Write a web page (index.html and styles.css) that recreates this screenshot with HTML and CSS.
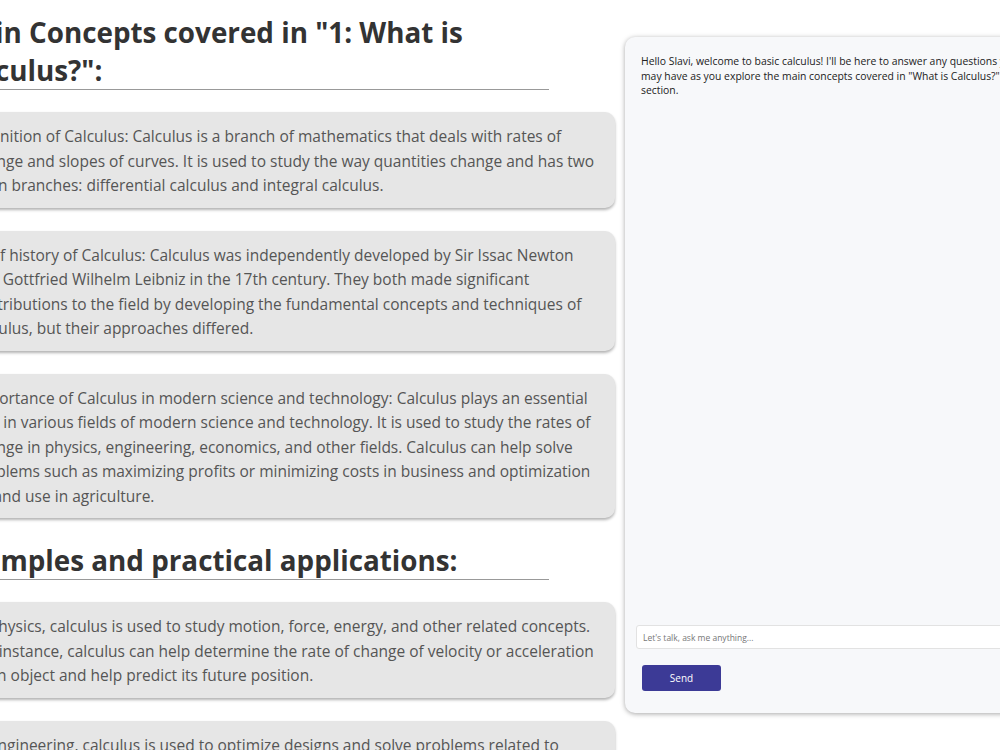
FILE: index.html
```html
<!DOCTYPE html>
<html lang="en">
<head>
  <meta charset="UTF-8">
  <title>Basic Calculus</title>
  <link rel="stylesheet" href="styles.css">
</head>
<body>

  <div id="page">
    <div id="lesson">
      <h2>Main Concepts covered in "1: What is Calculus?":</h2>

      <div class="concept-card">
        <p>Definition of Calculus: Calculus is a branch of mathematics that deals with rates of change and slopes of curves. It is used to study the way quantities change and has two main branches: differential calculus and integral calculus.</p>
      </div>
      <div class="concept-card">
        <p>Brief history of Calculus: Calculus was independently developed by Sir Issac Newton and Gottfried Wilhelm Leibniz in the 17th century. They both made significant contributions to the field by developing the fundamental concepts and techniques of calculus, but their approaches differed.</p>
      </div>
      <div class="concept-card">
        <p>Importance of Calculus in modern science and technology: Calculus plays an essential role in various fields of modern science and technology. It is used to study the rates of change in physics, engineering, economics, and other fields. Calculus can help solve problems such as maximizing profits or minimizing costs in business and optimization of land use in agriculture.</p>
      </div>

      <h2>Examples and practical applications:</h2>

      <div class="concept-card">
        <p>In physics, calculus is used to study motion, force, energy, and other related concepts. For instance, calculus can help determine the rate of change of velocity or acceleration in an object and help predict its future position.</p>
      </div>
      <div class="concept-card">
        <p>In engineering, calculus is used to optimize designs and solve problems related to structures, fluids and electrical circuits.</p>
      </div>
    </div>

    <div id="chat">
      <div id="messages">
        <p class="bot-msg">Hello Slavi, welcome to basic calculus! I'll be here to answer any questions you may have as you explore the main concepts covered in "What is Calculus?" section.</p>
      </div>
      <input type="text" id="question" placeholder="Let's talk, ask me anything...">
      <button id="send">Send</button>
    </div>
  </div>

</body>
</html>
```

FILE: styles.css
```css
body {
  font-family: "Open Sans", Arial, sans-serif;
  background-color: #fff;
  margin: 0;
  overflow: hidden;
}

#page {
  display: flex;
  align-items: flex-start;
  gap: 10px;
  margin-left: -48px;
  width: 1150px;
}

/* Lesson column */
#lesson {
  width: 663px;
  flex-shrink: 0;
  padding-top: 13px;
}

#lesson h2 {
  width: 90%;
  margin: 0 0 22px;
  font-size: 27.8px;
  line-height: 38px;
  color: #333;
  border-bottom: 1px solid #999;
}

.concept-card {
  background: #e6e6e6;
  border-radius: 10px;
  box-shadow: 0 2px 3px rgba(0,0,0,0.3);
  padding: 12px 17px 10px 19px;
  margin-bottom: 23px;
}

.concept-card p {
  margin: 0;
  font-size: 15.5px;
  line-height: 24.5px;
  color: #555;
}

/* Chat */
#chat {
  flex-shrink: 0;
  width: 420px;
  height: 676px;
  margin-top: 37px;
  background: #f7f8fa;
  border-radius: 10px;
  box-shadow: 0 1px 5px rgba(0,0,0,0.35);
  display: flex;
  flex-direction: column;
  padding: 17px 0 22px 11px;
  box-sizing: border-box;
}

#messages {
  flex: 1;
  padding: 0 16px 0 5px;
}

.bot-msg {
  margin: 0;
  font-size: 10.4px;
  line-height: 14.6px;
  color: #222;
}

#question {
  font-family: inherit;
  font-size: 8.5px;
  height: 24px;
  box-sizing: border-box;
  border: 1px solid #e2e2e2;
  border-radius: 3px;
  padding: 0 6px;
  background: #fff;
  margin-bottom: 16px;
}

#question::placeholder {
  color: #777;
}

#send {
  width: 79px;
  height: 26px;
  margin-left: 6px;
  background: #3c3a96;
  color: #fff;
  border: none;
  border-radius: 3px;
  font-family: inherit;
  font-size: 10px;
}
```
